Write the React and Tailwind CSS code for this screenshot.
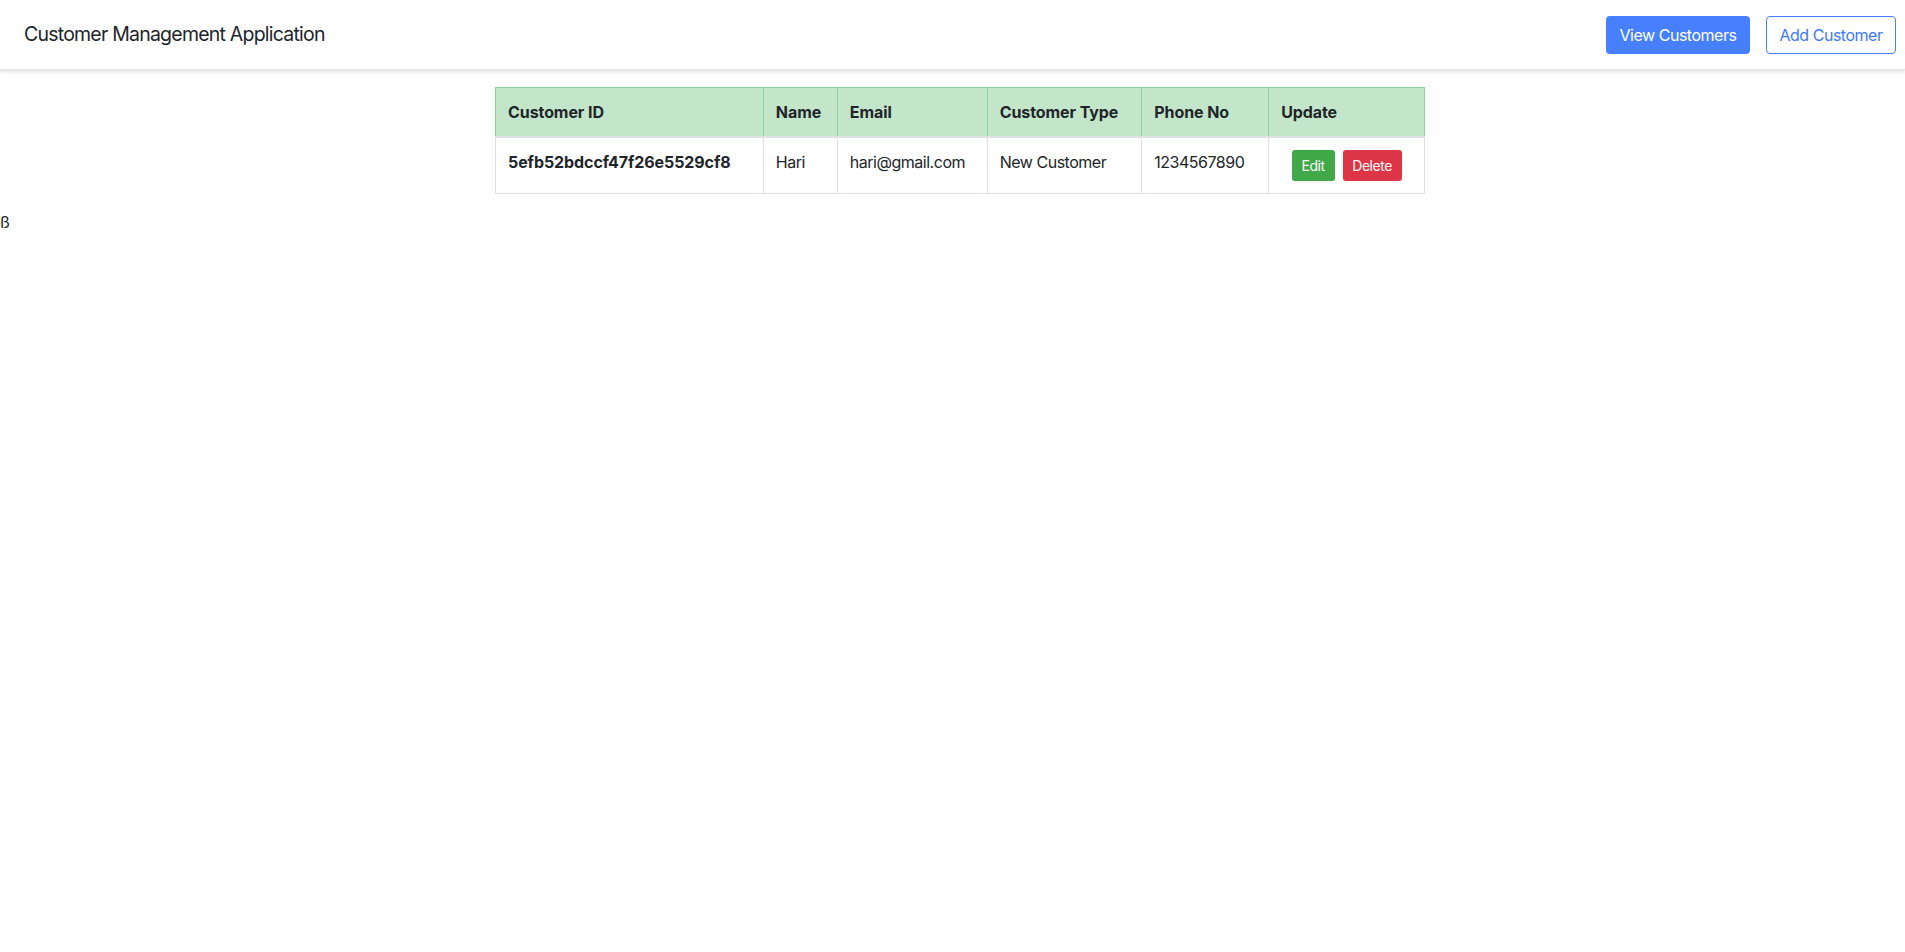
import React from 'react';

const customers = [
    {
        id: '5efb52bdccf47f26e5529cf8',
        name: 'Hari',
        email: 'hari@gmail.com',
        type: 'New Customer',
        phone: '1234567890',
    },
];

const headers = [
    { label: 'Customer ID', w: 'w-[268px]' },
    { label: 'Name', w: 'w-[74px]' },
    { label: 'Email', w: 'w-[150px]' },
    { label: 'Customer Type', w: 'w-[155px]' },
    { label: 'Phone No', w: 'w-[127px]' },
    { label: 'Update', w: 'w-[156px]' },
];

const App = () => {
    return (
        <div className="min-h-screen bg-white text-[#212529] font-['Inter','Liberation_Sans',sans-serif] text-base tracking-[-0.03em]">
            {/* Navbar */}
            <nav className="h-[70px] flex items-center justify-between pl-6 pr-[9px] bg-white shadow-[0_2px_4px_rgba(0,0,0,0.12)] border-b border-[#e4e5ea]">
                <span className="text-[19.5px] tracking-[-0.04em] text-[#212529]">Customer Management Application</span>
                <div className="flex gap-4">
                    <button className="h-[38px] w-[144px] rounded-[4px] bg-[#467fff] text-white text-base">
                        View Customers
                    </button>
                    <button className="h-[38px] w-[130px] rounded-[4px] border border-[#467fff] bg-white text-[#3d78ff] text-base">
                        Add Customer
                    </button>
                </div>
            </nav>

            {/* Customers table */}
            <div className="flex justify-center pl-[15px] pt-[17px]">
                <table className="w-[930px] border-collapse mb-4 text-left">
                    <thead>
                        <tr className="bg-[#c3e6cb]">
                            {headers.map((h) => (
                                <th
                                    key={h.label}
                                    className={`${h.w} border border-[#8fd19e] border-b-2 border-b-[#dee2e6] px-3 py-3 font-bold leading-6 align-bottom tracking-[-0.005em]`}
                                >
                                    {h.label}
                                </th>
                            ))}
                        </tr>
                    </thead>
                    <tbody>
                        {customers.map((c) => (
                            <tr key={c.id}>
                                <td className="border border-[#dee2e6] px-3 py-3 leading-6 align-top font-bold tracking-[-0.005em]">{c.id}</td>
                                <td className="border border-[#dee2e6] px-3 py-3 leading-6 align-top">{c.name}</td>
                                <td className="border border-[#dee2e6] px-3 py-3 leading-6 align-top">{c.email}</td>
                                <td className="border border-[#dee2e6] px-3 py-3 leading-6 align-top">{c.type}</td>
                                <td className="border border-[#dee2e6] px-3 py-3 leading-6 align-top">{c.phone}</td>
                                <td className="border border-[#dee2e6] px-3 py-3 leading-6 align-top">
                                    <div className="flex justify-center gap-2">
                                        <button className="h-[31px] w-[43px] rounded-[3px] bg-[#40a846] text-white text-sm">
                                            Edit
                                        </button>
                                        <button className="h-[31px] w-[59px] rounded-[3px] bg-[#dc3545] text-white text-sm">
                                            Delete
                                        </button>
                                    </div>
                                </td>
                            </tr>
                        ))}
                    </tbody>
                </table>
            </div>
            <div className="leading-6">ß</div>
        </div>
    );
};

export default App;
